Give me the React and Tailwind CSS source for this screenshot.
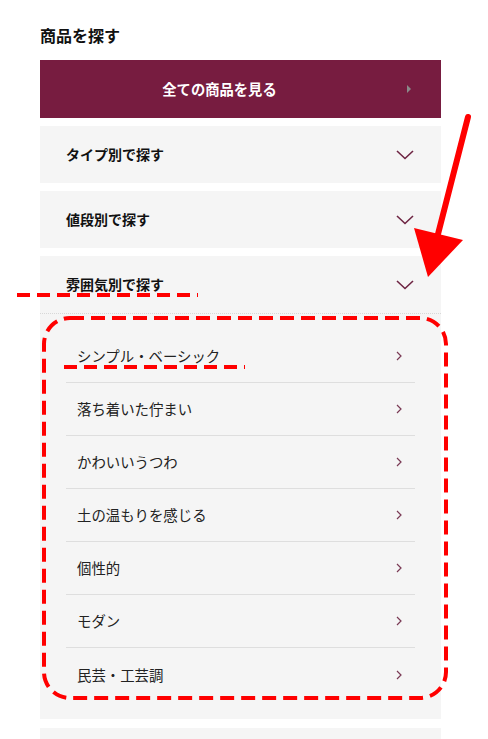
import React from 'react';

const categories = [
  'シンプル・ベーシック',
  '落ち着いた佇まい',
  'かわいいうつわ',
  '土の温もりを感じる',
  '個性的',
  'モダン',
  '民芸・工芸調',
];

const ChevronDown = () => (
  <svg width="18" height="10" viewBox="0 0 18 10" fill="none">
    <path d="M1 1l8 7.5L17 1" stroke="#6e2543" strokeWidth="1.6" />
  </svg>
);

const ChevronRight = () => (
  <svg width="6" height="10" viewBox="0 0 6 10" fill="none">
    <path d="M1 1l4 4-4 4" stroke="#7a3a55" strokeWidth="1.2" />
  </svg>
);

const AccordionHeader = ({ label }) => (
  <div className="flex h-[57px] items-center justify-between pl-[26px] pr-[27px]">
    <span className="text-[14px] font-bold text-[#111]">{label}</span>
    <ChevronDown />
  </div>
);

const Annotations = () => (
  <svg
    className="pointer-events-none absolute left-0 top-0"
    width="488"
    height="739"
    viewBox="0 0 488 739"
  >
    <g stroke="#ff0000" strokeWidth="4" fill="none">
      <line x1="17" y1="295" x2="198" y2="295" strokeDasharray="13 7" />
      <line x1="64" y1="367" x2="245" y2="367" strokeDasharray="13 7" />
      <rect x="44" y="318" width="402" height="380" rx="26" strokeDasharray="14 7" />
      <line x1="468" y1="117" x2="437" y2="238" strokeWidth="6" strokeLinecap="round" />
    </g>
    <polygon points="414,228 463,240 428,277" fill="#ff0000" />
  </svg>
);

export default function App() {
  return (
    <div
      className="relative min-h-[739px] w-[488px] bg-white px-10 pt-[25px]"
      style={{ fontFamily: '"Noto Sans CJK JP", "Noto Sans", sans-serif' }}
    >
      <h2 className="mb-[15px] text-[16px] font-bold leading-[20px] text-[#111]">商品を探す</h2>

      <div className="w-[401px]">
        <div className="relative flex h-[58px] items-center justify-center bg-[#771c40] pr-[42px]">
          <span className="text-[14.3px] font-bold text-white">全ての商品を見る</span>
          <span className="absolute right-[30px] top-1/2 h-0 w-0 -translate-y-1/2 border-y-[4px] border-l-[4px] border-y-transparent border-l-[#8a8a8a]" />
        </div>

        <div className="mt-[8px] bg-[#f5f5f5]">
          <AccordionHeader label="タイプ別で探す" />
        </div>
        <div className="mt-[8px] bg-[#f5f5f5]">
          <AccordionHeader label="値段別で探す" />
        </div>
        <div className="mt-[8px] bg-[#f5f5f5]">
          <AccordionHeader label="雰囲気別で探す" />
          <div className="border-t border-dotted border-[#d8d8d8] px-[26px] pb-[18px] pt-[16px]">
            {categories.map((c, i) => (
              <div
                key={c}
                className={
                  'flex h-[53px] items-center justify-between pl-[11px] pr-[13px] ' +
                  (i < categories.length - 1 ? 'border-b border-[#dedede]' : '')
                }
              >
                <span className="text-[14.4px] text-[#222]">{c}</span>
                <ChevronRight />
              </div>
            ))}
          </div>
        </div>
        <div className="mt-[9px] h-[20px] bg-[#f5f5f5]" />
      </div>

      <Annotations />
    </div>
  );
}
